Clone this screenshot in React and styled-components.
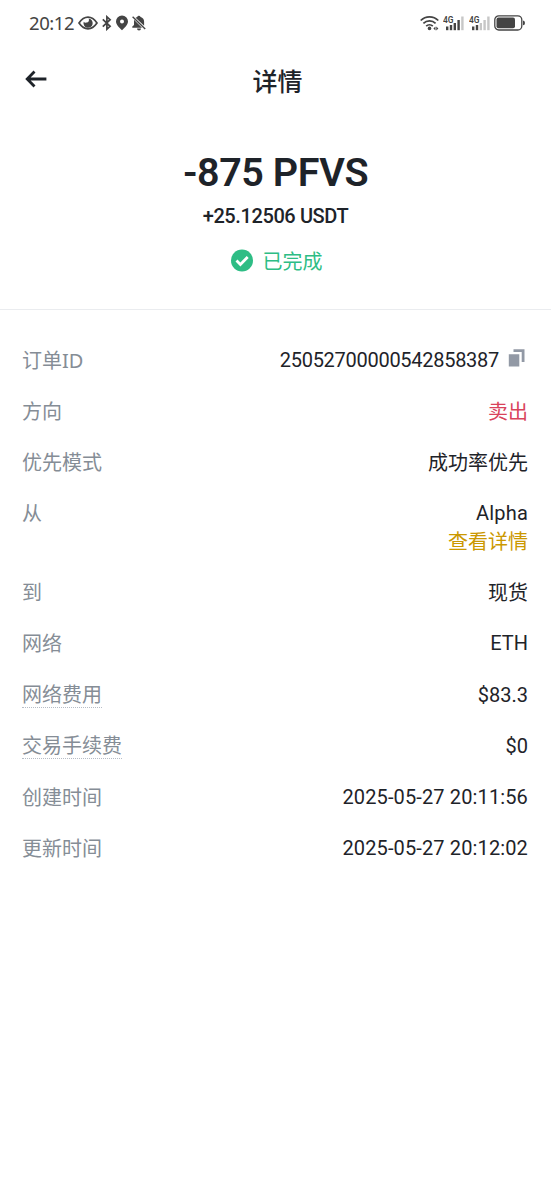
import styled, { createGlobalStyle } from "styled-components";

const GlobalStyle = createGlobalStyle`
	* {
		box-sizing: border-box;
	}
	body {
		margin: 0;
		background: #fff;
		color: #1e2329;
		font-family: Roboto, "Noto Sans CJK SC", sans-serif;
	}
`;

const Screen = styled.main`
	width: 551px;
	min-height: 1200px;
	background: #fff;
`;

const StatusBar = styled.div`
	display: flex;
	align-items: center;
	justify-content: space-between;
	height: 46px;
	padding: 0 25px 0 29px;
	color: #444;
`;

const StatusGroup = styled.div`
	display: flex;
	align-items: center;
	gap: ${({ $gap }) => $gap}px;
`;

const Clock = styled.span`
	font-family: "Noto Sans", sans-serif;
	font-size: 18.5px;
	line-height: 24px;
	letter-spacing: -0.45px;
`;

const Header = styled.header`
	display: grid;
	grid-template-columns: 30px 1fr 30px;
	align-items: center;
	height: 68px;
	padding: 0 21px;
`;

const BackButton = styled.button`
	display: flex;
	padding: 0 0 2px 3px;
	border: 0;
	background: none;
	color: inherit;
`;

const Title = styled.h1`
	margin: 0;
	padding: 6px 0 0 4px;
	font-size: 25px;
	font-weight: 500;
	line-height: 34px;
	text-align: center;
`;

const Summary = styled.section`
	display: flex;
	flex-direction: column;
	align-items: center;
	height: 196px;
	padding-top: 34px;
	border-bottom: 1px solid #eaecef;
`;

const Amount = styled.div`
	font-size: 39.5px;
	font-weight: 600;
	line-height: 49px;
	letter-spacing: -0.4px;
`;

const Received = styled.div`
	margin-top: 5px;
	font-size: 20px;
	font-weight: 500;
	line-height: 28px;
	letter-spacing: -0.4px;
`;

const Status = styled.div`
	display: flex;
	align-items: center;
	gap: 10px;
	margin-top: 18px;
	padding-left: 2px;
	color: #2ebd85;
	font-size: 20px;
	line-height: 28px;
`;

const List = styled.dl`
	display: flex;
	flex-direction: column;
	gap: 23.1px;
	margin: 0;
	padding: 36px 23px 0 22px;
`;

const Row = styled.div`
	display: flex;
	justify-content: space-between;
	min-height: 28px;
	font-size: 20px;
	line-height: 28px;
`;

const Label = styled.dt`
	margin-bottom: -1px;
	padding-top: ${({ $hint }) => ($hint ? 0 : 1)}px;
	color: #858d96;
	font-family: "Noto Sans", "Noto Sans CJK SC", sans-serif;
`;

const Hint = styled.span`
	display: block;
	height: 27px;
	border-bottom: 1px dotted #b7bdc6;
`;

const Value = styled.dd`
	display: flex;
	flex-direction: column;
	align-items: flex-end;
	margin: 0 0 -1px;
	padding-top: ${({ $cjk }) => ($cjk ? 1 : 0)}px;
	color: ${({ $color }) => $color || "#1e2329"};
	letter-spacing: ${({ $spacing }) => $spacing || 0}px;
`;

const IdLine = styled.span`
	display: flex;
	gap: 9px;
`;

const DetailLink = styled.a`
	padding-top: 1px;
	color: #cb9800;
	letter-spacing: 0;
`;

const EyeIcon = () => (
	<svg width="20" height="16" viewBox="0 0 20 16" fill="none">
		<path d="M1 8Q5 2.200 10 2.200T19 8Q15 13.800 10 13.800T1 8Z" stroke="currentColor" strokeWidth="1.700" />
		<path d="M10.500 3.600a2.500 2.500 0 0 1-2 4 2.600 2.600 0 0 1-2.800-.8A4.600 4.600 0 1 0 10.500 3.600Z" fill="currentColor" />
	</svg>
);

const BluetoothIcon = () => (
	<svg width="10" height="16" viewBox="0 0 10 16" fill="none" stroke="currentColor" strokeWidth="1.700">
		<path d="M.8 4.300l7.300 7-3.200 2.900V1.800l3.200 2.900-7.300 7" />
	</svg>
);

const PinIcon = () => (
	<svg width="12" height="16" viewBox="0 0 12 16" fill="currentColor" fillRule="evenodd">
		<path d="M6 .5a6 6 0 0 0-6 6c0 3.600 4 6.500 6 8.800 2-2.300 6-5.200 6-8.800a6 6 0 0 0-6-6Zm0 4a2 2 0 1 1 0 4 2 2 0 0 1 0-4Z" />
	</svg>
);

const MutedIcon = () => (
	<svg width="14" height="16" viewBox="0 0 14 16" fill="currentColor">
		<path d="M2 4.800 10 12.700H.3v-1.200l1.700-1.500ZM3.600 2.800l1.600-.8a1.800 1.800 0 0 1 3.400 0c2.300.7 3.500 2.300 3.500 4.700v4ZM5 13.500h4a2 2 0 0 1-4 0Z" />
		<path d="M.6 1.800l12.600 12.200" stroke="currentColor" strokeWidth="1.400" />
	</svg>
);

const WifiIcon = () => (
	<svg width="20" height="16" viewBox="0 0 20 16" fill="none" stroke="currentColor" strokeWidth="1.700">
		<path d="M.7 5.500a12.500 12.500 0 0 1 17.600 0M3.400 8.400a8.600 8.600 0 0 1 12.200 0M6.200 11.200a4.700 4.700 0 0 1 6.600 0" />
		<circle cx="9.500" cy="13.400" r="1.800" fill="currentColor" stroke="none" />
		<path d="M15.500 11.400 13.400 13.400l2.100 2ZM16.300 11.400l2.100 2-2.100 2Z" fill="currentColor" stroke="none" />
	</svg>
);

const bars = [
	[3, 11.5],
	[6.8, 10],
	[10.6, 8],
	[14.4, 5],
	[18.2, 1.5],
];

const SignalIcon = ({ level }) => (
	<svg width="22" height="16" viewBox="0 0 22 16" fill="currentColor">
		{bars.map(([x, y], i) => (
			<rect key={x} x={x} y={y} width="2.4" height={15.2 - y} opacity={i < level ? 1 : 0.3} />
		))}
		<text x="0" y="7.800" fontFamily="Roboto, sans-serif" fontSize="9.500" fontWeight="600" textLength="10.500" lengthAdjust="spacingAndGlyphs">
			4G
		</text>
	</svg>
);

const BatteryIcon = () => (
	<svg width="32" height="16" viewBox="0 0 32 16" fill="none">
		<rect x=".8" y=".8" width="27" height="14.200" rx="4" stroke="currentColor" strokeWidth="1.300" />
		<rect x="2.500" y="2.600" width="18.500" height="10.600" rx="2" fill="currentColor" />
		<path d="M29 5.500q2 .3 2 2.400t-2 2.400Z" fill="currentColor" />
	</svg>
);

const BackIcon = () => (
	<svg width="24" height="20" viewBox="0 0 24 20" fill="none" stroke="currentColor" strokeWidth="2.800">
		<path d="M10.500 2.500 3.200 10l7.300 7.500M3.400 10h19" />
	</svg>
);

const DoneIcon = () => (
	<svg width="22" height="28" viewBox="0 0 22 28" fill="none">
		<circle cx="11" cy="12.500" r="11" fill="#2ebd85" />
		<path d="m5.500 12.500 3.900 3.900 7.300-7.300" stroke="#fff" strokeWidth="2.800" />
	</svg>
);

const CopyIcon = () => (
	<svg width="20" height="28" viewBox="0 0 20 28" fill="#9299a5">
		<path d="M.8 8.200H11.300V20.500H.8ZM5.500 3.300H16.500V16h-2.800V6H5.500Z" />
	</svg>
);

const rows = [
	{ label: "方向", value: "卖出", color: "#d9435b", cjk: true },
	{ label: "优先模式", value: "成功率优先", cjk: true },
	{ label: "从", value: "Alpha", link: "查看详情", spacing: 0.2 },
	{ label: "到", value: "现货", cjk: true },
	{ label: "网络", value: "ETH" },
	{ label: "网络费用", value: "$83.3", hint: true },
	{ label: "交易手续费", value: "$0", hint: true },
	{ label: "创建时间", value: "2025-05-27 20:11:56", spacing: 0.13 },
	{ label: "更新时间", value: "2025-05-27 20:12:02", spacing: 0.13 },
];

export default function App() {
	return (
		<>
			<GlobalStyle />
			<Screen>
				<StatusBar>
					<StatusGroup $gap={4}>
						<Clock>20:12</Clock>
						<EyeIcon />
						<BluetoothIcon />
						<PinIcon />
						<MutedIcon />
					</StatusGroup>
					<StatusGroup $gap={3.5}>
						<WifiIcon />
						<SignalIcon level={4} />
						<SignalIcon level={2} />
						<BatteryIcon />
					</StatusGroup>
				</StatusBar>
				<Header>
					<BackButton aria-label="返回">
						<BackIcon />
					</BackButton>
					<Title>详情</Title>
				</Header>
				<Summary>
					<Amount>-875 PFVS</Amount>
					<Received>+25.12506 USDT</Received>
					<Status>
						<DoneIcon />
						已完成
					</Status>
				</Summary>
				<List>
					<Row>
						<Label>订单ID</Label>
						<Value $spacing={-0.28}>
							<IdLine>
								25052700000542858387
								<CopyIcon />
							</IdLine>
						</Value>
					</Row>
					{rows.map(({ label, value, color, link, hint, spacing, cjk }) => (
						<Row key={label}>
							<Label $hint={hint}>{hint ? <Hint>{label}</Hint> : label}</Label>
							<Value $color={color} $spacing={spacing} $cjk={cjk}>
								{value}
								{link && <DetailLink>{link}</DetailLink>}
							</Value>
						</Row>
					))}
				</List>
			</Screen>
		</>
	);
}
